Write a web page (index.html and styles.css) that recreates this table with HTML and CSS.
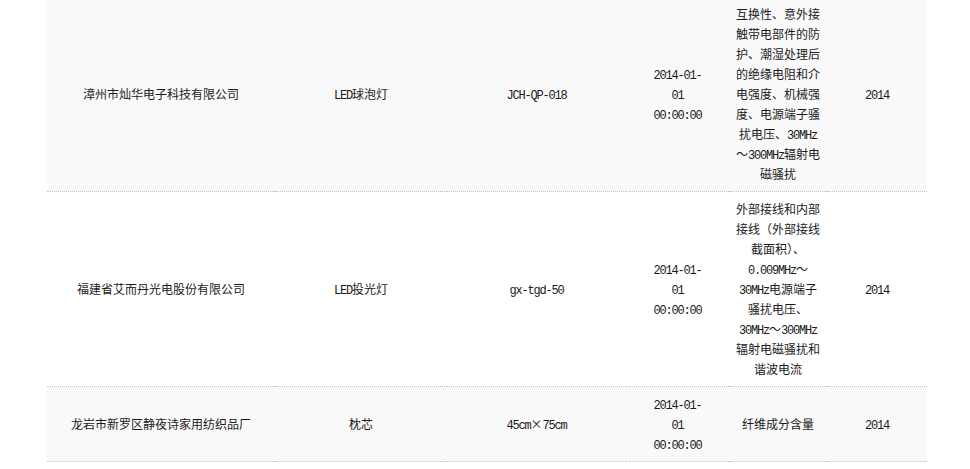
FILE: index.html
```html
<!DOCTYPE html>
<html lang="zh-CN">
<head>
<meta charset="utf-8">
<title>产品列表</title>
<link rel="stylesheet" href="styles.css">
</head>
<body>
<div class="wrap">
  <table class="list">
    <colgroup>
      <col class="c-company">
      <col class="c-name">
      <col class="c-model">
      <col class="c-date">
      <col class="c-item">
      <col class="c-year">
    </colgroup>
    <tbody>
      <tr class="odd">
        <td>漳州市灿华电子科技有限公司</td>
        <td><span class="en">LED</span>球泡灯</td>
        <td><span class="en">JCH-QP-018</span></td>
        <td><span class="en">2014-01-</span><br><span class="en">01</span><br><span class="en">00:00:00</span></td>
        <td class="item">互换性、意外接<br>触带电部件的防<br>护、潮湿处理后<br>的绝缘电阻和介<br>电强度、机械强<br>度、电源端子骚<br>扰电压、<span class="en">30MHz</span><br>～<span class="en">300MHz</span>辐射电<br>磁骚扰</td>
        <td><span class="en">2014</span></td>
      </tr>
      <tr class="even">
        <td>福建省艾而丹光电股份有限公司</td>
        <td><span class="en">LED</span>投光灯</td>
        <td><span class="en">gx-tgd-50</span></td>
        <td><span class="en">2014-01-</span><br><span class="en">01</span><br><span class="en">00:00:00</span></td>
        <td class="item">外部接线和内部<br>接线（外部接线<br>截面积）、<br><span class="en">0.009MHz</span>～<br><span class="en">30MHz</span>电源端子<br>骚扰电压、<br><span class="en">30MHz</span>～<span class="en">300MHz</span><br>辐射电磁骚扰和<br>谐波电流</td>
        <td><span class="en">2014</span></td>
      </tr>
      <tr class="odd">
        <td>龙岩市新罗区静夜诗家用纺织品厂</td>
        <td>枕芯</td>
        <td><span class="en">45cm</span>×<span class="en">75cm</span></td>
        <td><span class="en">2014-01-</span><br><span class="en">01</span><br><span class="en">00:00:00</span></td>
        <td class="item">纤维成分含量</td>
        <td><span class="en">2014</span></td>
      </tr>
    </tbody>
  </table>
</div>
</body>
</html>
```
FILE: styles.css
```css
html, body {
  margin: 0;
  padding: 0;
  background: #ffffff;
}

body {
  font-family: "Noto Sans CJK SC", "Noto Sans", sans-serif;
  font-size: 12px;
  color: #1a1a1a;
}

.wrap {
  padding-left: 47px;
  width: 880px;
}

.list {
  width: 880px;
  margin-top: -3px;
  border-collapse: collapse;
  table-layout: fixed;
}

.c-company { width: 228px; }
.c-name { width: 172px; }
.c-model { width: 179px; }
.c-date { width: 103px; }
.c-item { width: 98px; }
.c-year { width: 100px; }

.list td {
  padding: 7px 0;
  line-height: 20px;
  text-align: center;
  vertical-align: middle;
  white-space: nowrap;
  border-bottom: 1px dotted #c4c4c4;
}

.list tr.odd td {
  background: #f9f9f9;
}

.list tr.even td {
  background: #ffffff;
}

.en {
  font-family: "Liberation Mono", monospace;
  font-size: 12px;
  line-height: 12px;
  letter-spacing: -1.2px;
}
```
